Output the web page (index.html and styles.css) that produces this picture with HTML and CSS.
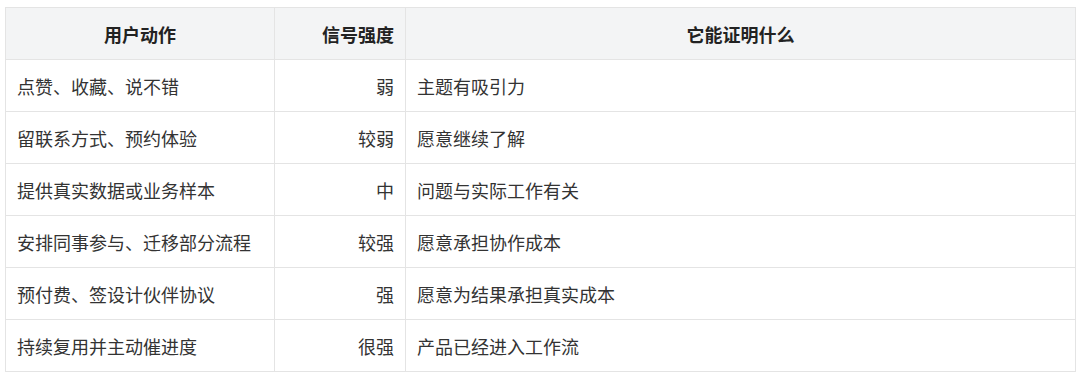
FILE: index.html
```html
<!DOCTYPE html>
<html lang="zh-CN">
<head>
<meta charset="utf-8">
<link rel="stylesheet" href="styles.css">
</head>
<body>
<table class="tbl">
  <colgroup>
    <col class="c1">
    <col class="c2">
    <col class="c3">
  </colgroup>
  <thead>
    <tr>
      <th class="center">用户动作</th>
      <th class="right">信号强度</th>
      <th class="center">它能证明什么</th>
    </tr>
  </thead>
  <tbody>
    <tr><td>点赞、收藏、说不错</td><td class="right">弱</td><td>主题有吸引力</td></tr>
    <tr><td>留联系方式、预约体验</td><td class="right">较弱</td><td>愿意继续了解</td></tr>
    <tr><td>提供真实数据或业务样本</td><td class="right">中</td><td>问题与实际工作有关</td></tr>
    <tr><td>安排同事参与、迁移部分流程</td><td class="right">较强</td><td>愿意承担协作成本</td></tr>
    <tr><td>预付费、签设计伙伴协议</td><td class="right">强</td><td>愿意为结果承担真实成本</td></tr>
    <tr><td>持续复用并主动催进度</td><td class="right">很强</td><td>产品已经进入工作流</td></tr>
  </tbody>
</table>
</body>
</html>
```

FILE: styles.css
```css
html, body {
  margin: 0;
  background: #ffffff;
}
body {
  padding: 7px 5px 0 5px;
  font-family: "Noto Sans CJK SC", "Noto Sans", sans-serif;
  color: #333333;
}
.tbl {
  border-collapse: collapse;
  table-layout: fixed;
  width: 1070px;
  font-size: 18px;
}
.c1 { width: 269px; }
.c2 { width: 131px; }
.c3 { width: 670px; }
.tbl th, .tbl td {
  border: 1px solid #e4e4e4;
  height: 52px;
  padding: 0 11px;
  box-sizing: border-box;
  line-height: 26px;
  vertical-align: middle;
  text-align: left;
}
.tbl th {
  background: #f3f4f5;
  font-weight: 700;
  color: #222222;
}
.tbl .center { text-align: center; }
.tbl .right { text-align: right; }
```
